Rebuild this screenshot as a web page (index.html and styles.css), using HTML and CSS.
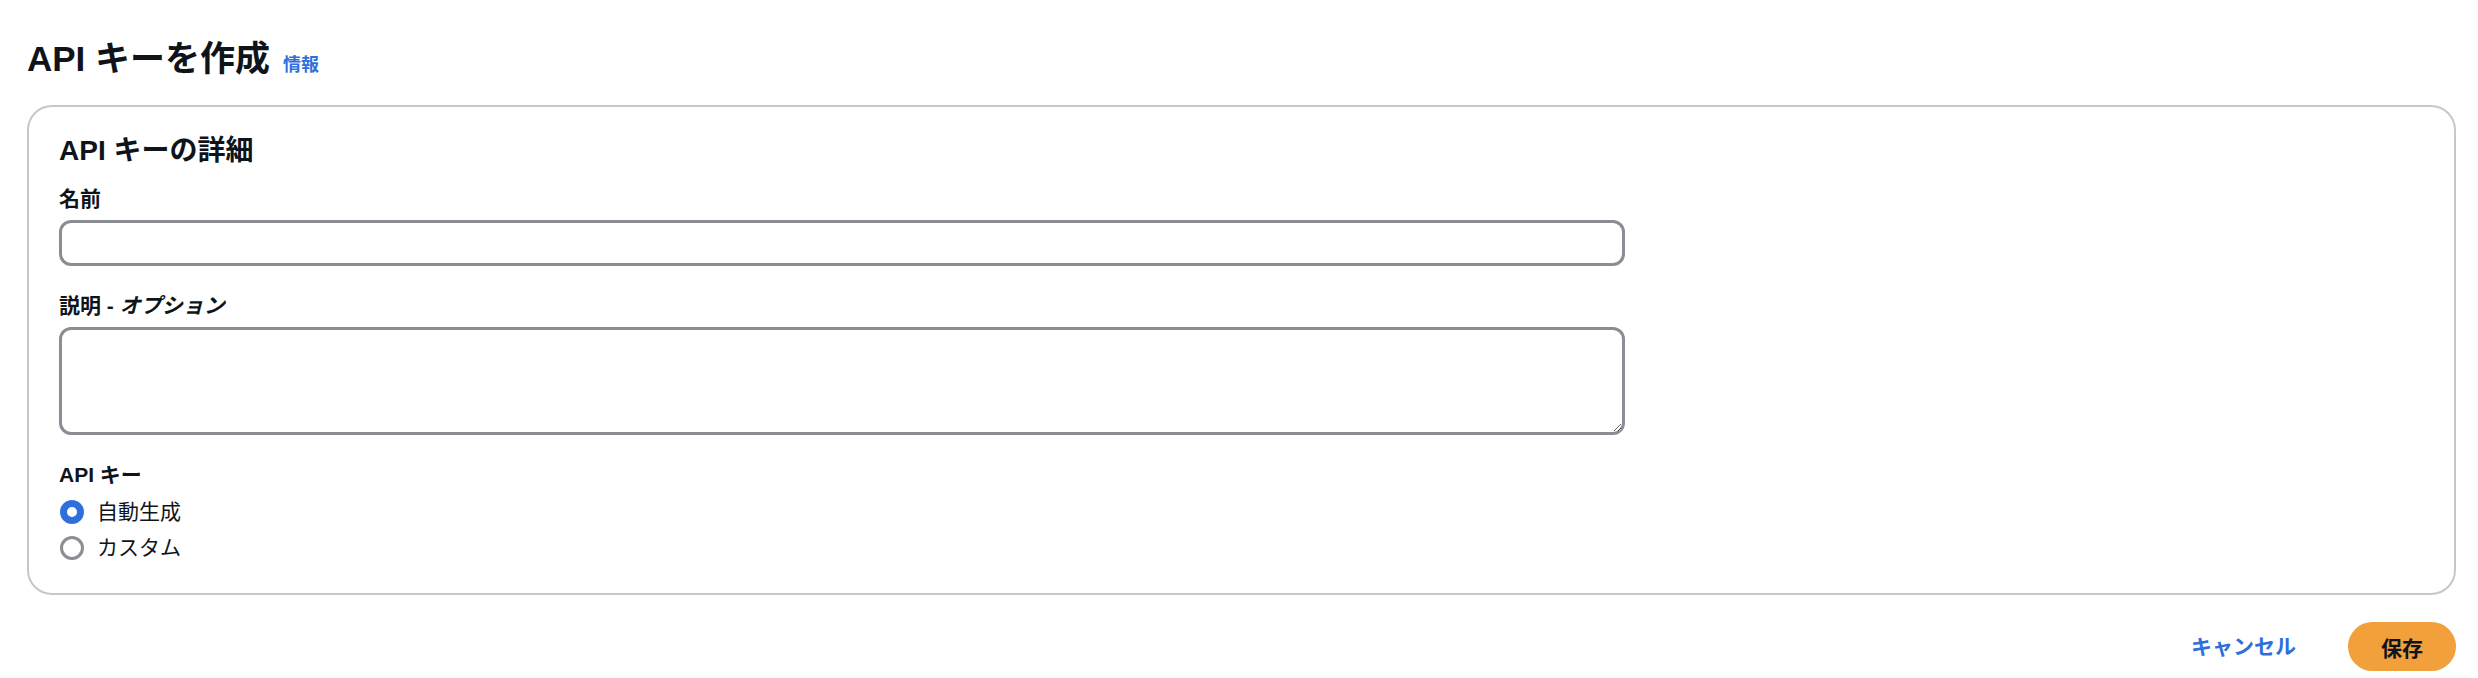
FILE: index.html
```html
<!DOCTYPE html>
<html lang="ja">
<head>
<meta charset="utf-8">
<title>API キーを作成</title>
<link rel="stylesheet" href="styles.css">
</head>
<body>
<div class="page">
  <div class="page-header">
    <h1 class="title">API キーを作成</h1>
    <a class="info" href="#">情報</a>
  </div>
  <section class="container">
    <h2 class="section-title">API キーの詳細</h2>
    <div class="field">
      <label class="label" for="name">名前</label>
      <input class="input" id="name" type="text">
    </div>
    <div class="field">
      <label class="label" for="desc">説明 - <i>オプション</i></label>
      <textarea class="textarea" id="desc"></textarea>
    </div>
    <div class="field">
      <div class="label">API キー</div>
      <div class="radios">
        <label class="radio"><span class="dot checked"></span><span>自動生成</span></label>
        <label class="radio"><span class="dot"></span><span>カスタム</span></label>
      </div>
    </div>
  </section>
  <div class="actions">
    <a class="cancel" href="#">キャンセル</a>
    <button class="save" type="button">保存</button>
  </div>
</div>
</body>
</html>
```

FILE: styles.css
```css
* { box-sizing: border-box; }
html, body { margin: 0; background: #ffffff; }
body {
  font-family: "Liberation Sans", "Noto Sans CJK JP", sans-serif;
  color: #0f141a;
  font-size: 21px;
  line-height: 31px;
}
.page {
  padding: 36px 22px 0 27px;
}
.page-header {
  display: flex;
  align-items: baseline;
  gap: 13px;
  height: 46px;
}
.title {
  margin: 0;
  font-size: 35px;
  line-height: 46px;
  font-weight: 700;
}
.info {
  font-size: 18px;
  font-weight: 700;
  color: #2f6fdc;
  text-decoration: none;
}
.container {
  margin-top: 23px;
  border: 2px solid #c6c6cd;
  border-radius: 25px;
  padding: 24px 30px 30px 30px;
  background: #fff;
}
.section-title {
  margin: 0;
  font-size: 28px;
  line-height: 40px;
  font-weight: 700;
}
.field {
  display: flex;
  flex-direction: column;
  margin-top: 24px;
}
.section-title + .field { margin-top: 12px; }
.label {
  font-weight: 700;
  font-size: 21px;
  line-height: 31px;
  margin-bottom: 6px;
}
.label i { font-style: italic; }
.input, .textarea {
  width: 1566px;
  border: 3px solid #8c8c94;
  border-radius: 12px;
  background: #fff;
  font: inherit;
  outline: none;
}
.input { height: 46px; }
.textarea { height: 108px; resize: vertical; display: block; }
.radios {
  display: flex;
  flex-direction: column;
  gap: 5px;
}
.radio {
  display: flex;
  align-items: center;
  gap: 13px;
  height: 31px;
  padding-left: 1px;
  font-size: 21px;
}
.dot {
  width: 24px;
  height: 24px;
  border-radius: 50%;
  border: 3px solid #8c8c94;
  background: #fff;
  flex: none;
}
.dot.checked {
  border: 7.5px solid #2f6fdc;
  background: #fff;
}
.actions {
  display: flex;
  justify-content: flex-end;
  align-items: center;
  gap: 52px;
  margin-top: 27px;
}
.cancel {
  font-weight: 700;
  font-size: 21px;
  color: #2f6fdc;
  text-decoration: none;
}
.save {
  width: 108px;
  height: 49px;
  border: none;
  border-radius: 25px;
  background: #f1a03c;
  color: #0f141a;
  font-family: inherit;
  font-weight: 700;
  font-size: 21px;
  cursor: pointer;
}
```
